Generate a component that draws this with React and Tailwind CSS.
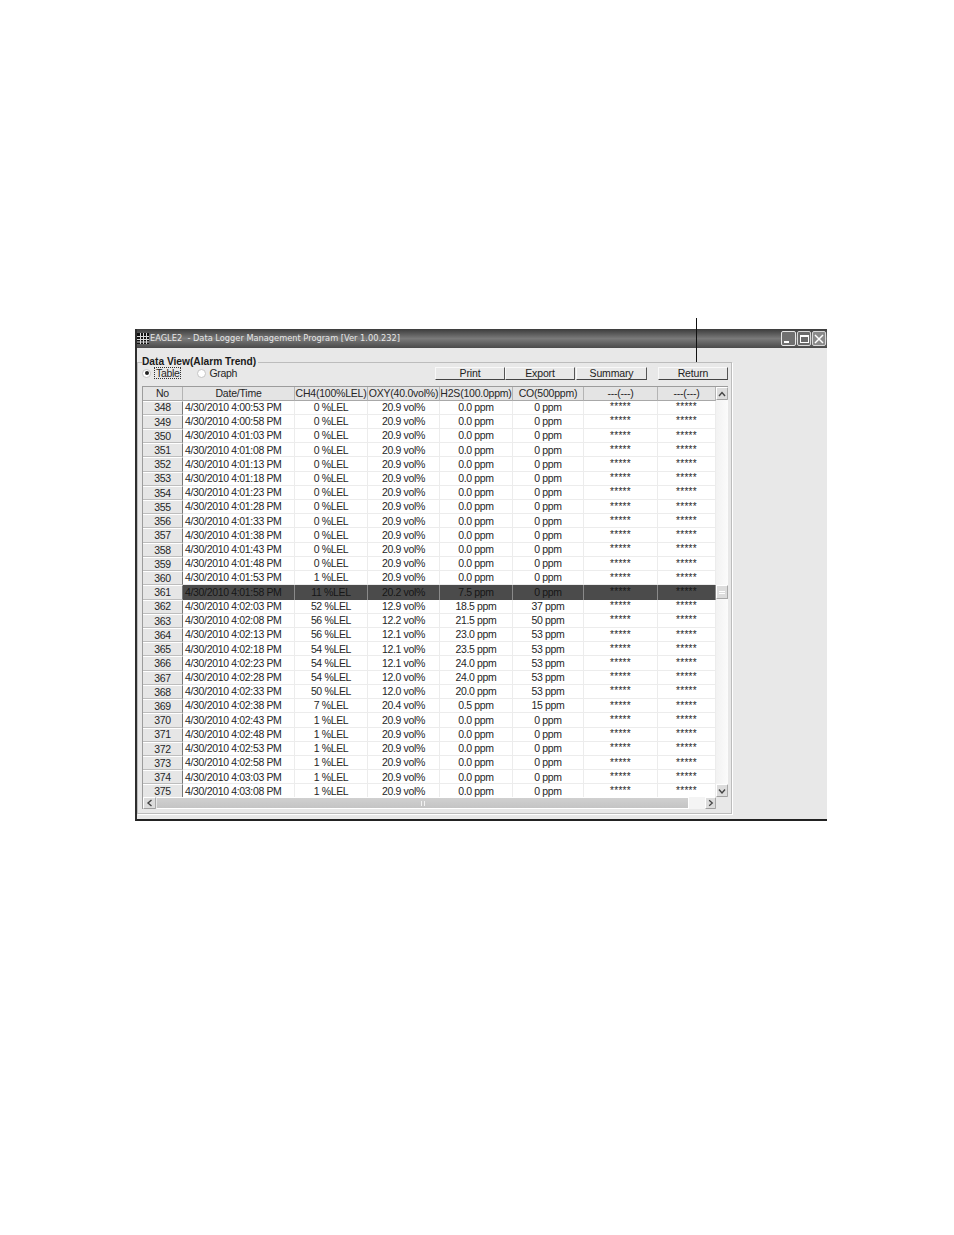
const font = "[font-family:'Liberation_Sans',Arial,sans-serif]";

const rowGrid = 'grid grid-cols-[40px_112px_73px_72px_73px_71px_74px_58px]';

const alarmRows = {
  360: [1, '20.9', '0.0', 0],
  361: [11, '20.2', '7.5', 0],
  362: [52, '12.9', '18.5', 37],
  363: [56, '12.2', '21.5', 50],
  364: [56, '12.1', '23.0', 53],
  365: [54, '12.1', '23.5', 53],
  366: [54, '12.1', '24.0', 53],
  367: [54, '12.0', '24.0', 53],
  368: [50, '12.0', '20.0', 53],
  369: [7, '20.4', '0.5', 15],
};

function timeFor(no) {
  const secs = 53 + (no - 348) * 5;
  const min = Math.floor(secs / 60);
  const hhmm = 240 + min;
  const h = Math.floor(hhmm / 60);
  const m = hhmm % 60;
  const s = secs % 60;
  return `4/30/2010 ${h}:${String(m).padStart(2, '0')}:${String(s).padStart(2, '0')} PM`;
}

function buildRows() {
  const rows = [];
  for (let no = 348; no <= 375; no++) {
    const vals = alarmRows[no] || (no < 360 ? [0, '20.9', '0.0', 0] : [1, '20.9', '0.0', 0]);
    rows.push({ no, time: timeFor(no), ch4: vals[0], oxy: vals[1], h2s: vals[2], co: vals[3] });
  }
  return rows;
}

function HeaderCell({ children }) {
  return (
    <div className="flex items-center justify-center border-r border-[#b4b4b4] border-b border-b-[#a8a8a8] bg-[#e4e4e4] whitespace-nowrap overflow-hidden text-[10.5px] tracking-[-0.22px]">
      {children}
    </div>
  );
}

function Row({ row }) {
  const selected = row.no === 361;
  const cell = selected
    ? 'flex items-center justify-center bg-[#4b4b4b] border-r border-[#8a8a8a] text-[#161616] whitespace-nowrap'
    : 'flex items-center justify-center border-r border-b border-[#ececec] whitespace-nowrap';
  return (
    <div className={`${rowGrid} h-[14.22px] shrink-0 leading-none`}>
      <div className="flex items-center justify-center bg-[#e6e6e6] border-r border-r-[#777777] border-b border-b-[#bdbdbd] border-t border-t-white">
        {row.no}
      </div>
      <div className={`${cell} !justify-start pl-[2px]`}>{row.time}</div>
      <div className={cell}>{row.ch4} %LEL</div>
      <div className={cell}>{row.oxy} vol%</div>
      <div className={cell}>{row.h2s} ppm</div>
      <div className={cell}>{row.co} ppm</div>
      <div className={`${cell} text-[10px] tracking-[0.3px]`}>*****</div>
      <div className={`${cell} text-[10px] tracking-[0.3px]`}>*****</div>
    </div>
  );
}

function ToolButton({ label, className = '' }) {
  return (
    <button className={`h-[13px] w-[70px] bg-[#e8e8e8] border-t border-l border-t-[#f8f8f8] border-l-[#f8f8f8] border-r border-b border-r-[#555555] border-b-[#444444] text-[10.5px] tracking-[-0.15px] leading-none text-[#222222] ${className}`}>
      {label}
    </button>
  );
}

function Radio({ checked }) {
  return (
    <span className="flex items-center justify-center w-[9px] h-[9px] rounded-full bg-white border border-[#c4c4c4]">
      {checked && <span className="w-[4px] h-[4px] rounded-full bg-[#222222]" />}
    </span>
  );
}

function ScrollBtn({ dir, className = '' }) {
  const paths = {
    up: 'M2 7 L5 3.5 L8 7',
    down: 'M2 3.5 L5 7 L8 3.5',
    left: 'M6.5 2 L3 5 L6.5 8',
    right: 'M3.5 2 L7 5 L3.5 8',
  };
  return (
    <div className={`flex items-center justify-center shrink-0 bg-[#dcdcdc] border border-white border-r-[#a8a8a8] border-b-[#a0a0a0] rounded-[1px] ${className}`}>
      <svg width="10" height="10" viewBox="0 0 10 10">
        <path d={paths[dir]} fill="none" stroke="#444444" strokeWidth="1.4" />
      </svg>
    </div>
  );
}

export default function App() {
  const rows = buildRows();
  return (
    <div className={`relative w-[954px] h-[1235px] bg-white pt-[329px] pl-[135px] ${font} text-[10.5px] tracking-[-0.34px] text-[#262626]`}>
      {/* leader line to the Return button */}
      <div className="absolute left-[696px] top-[318px] w-px h-[44px] bg-[#111111] z-10" />

      <div className="w-[692px] h-[492px] bg-[#e8e8e8] border-l-2 border-l-[#2e2e2e] border-b-2 border-b-[#222222] flex flex-col">
        {/* title bar */}
        <div className="h-[19px] shrink-0 flex items-center bg-gradient-to-b from-[#3c3c3c] via-[#7a7a7a] to-[#4a4a4a] pr-[1px]">
          <svg width="12" height="11" viewBox="0 0 12 11" className="shrink-0">
            <rect width="12" height="11" fill="#111111" />
            <path d="M0 3.5H12M0 6.5H12M0 9H12M3.5 0V11M6.5 0V11M9.5 0V11" stroke="#d8d8d8" strokeWidth="1" />
          </svg>
          <span className="ml-[1px] text-[8.25px] tracking-normal text-[#e6e6e6] whitespace-pre [font-family:'DejaVu_Sans',sans-serif]">
            EAGLE2  - Data Logger Management Program [Ver 1.00.232]
          </span>
          <div className="ml-auto flex gap-[1px]">
            <div className="relative w-[15px] h-[15px] rounded-[2px] border border-[#e8e8e8] bg-[#707070]">
              <div className="absolute left-[2px] bottom-[2px] w-[5px] h-[2px] bg-white" />
            </div>
            <div className="flex items-center justify-center w-[14px] h-[15px] rounded-[2px] border border-[#d8d8d8] bg-[#6a6a6a]">
              <div className="w-[9px] h-[8px] border border-white border-t-2" />
            </div>
            <div className="flex items-center justify-center w-[14px] h-[15px] rounded-[2px] border border-[#d8d8d8] bg-[#8a8a8a]">
              <svg width="10" height="10" viewBox="0 0 10 10">
                <path d="M1 1L9 9M9 1L1 9" stroke="#ffffff" strokeWidth="1.5" />
              </svg>
            </div>
          </div>
        </div>

        {/* group box */}
        <div className="mt-[14px] w-[595px] h-[452px] border border-[#bcbcbc] shadow-[1px_1px_0_#ffffff] relative px-[4px] pt-[3px]">
          <span className="absolute left-[4px] top-[-6px] bg-[#e8e8e8] pr-[2px] text-[10.2px] tracking-normal font-bold leading-none text-[#1a1a1a]">
            Data View(Alarm Trend)
          </span>

          <div className="flex items-center h-[14px] relative">
            <Radio checked />
            <span className="ml-[3px] border border-dotted border-[#333333] px-[1px] leading-[10px]">Table</span>
            <span className="ml-[16px]"><Radio /></span>
            <span className="ml-[3px] leading-[10px]">Graph</span>
            <div className="ml-auto flex -mr-[1px]">
              <ToolButton label="Print" />
              <ToolButton label="Export" />
              <ToolButton label="Summary" className="ml-[1px] w-[71px]" />
              <ToolButton label="Return" className="ml-[11px]" />
            </div>
          </div>

          {/* data grid */}
          <div className="mt-[6px] w-[586px] h-[423px] bg-white border-t border-l border-[#9c9c9c] flex flex-col">
            <div className="flex flex-1 min-h-0">
              <div className="w-[573px] flex flex-col overflow-hidden">
                <div className={`${rowGrid} h-[13.5px] shrink-0 leading-none`}>
                  <HeaderCell>No</HeaderCell>
                  <HeaderCell>Date/Time</HeaderCell>
                  <HeaderCell>CH4(100%LEL)</HeaderCell>
                  <HeaderCell>OXY(40.0vol%)</HeaderCell>
                  <HeaderCell>H2S(100.0ppm)</HeaderCell>
                  <HeaderCell>CO(500ppm)</HeaderCell>
                  <HeaderCell>---(---)</HeaderCell>
                  <HeaderCell>---(---)</HeaderCell>
                </div>
                {rows.map((r) => <Row key={r.no} row={r} />)}
              </div>
              {/* vertical scrollbar */}
              <div className="w-[12px] flex flex-col bg-gradient-to-r from-[#f2f2f2] to-[#fbfbfb]">
                <ScrollBtn dir="up" className="h-[13px]" />
                <div className="flex-1 flex flex-col pt-[185px]">
                  <div className="h-[14px] bg-[#dcdcdc] border border-white border-r-[#a8a8a8] border-b-[#a8a8a8] flex flex-col items-center justify-center gap-[1px]">
                    <div className="w-[6px] h-px bg-white" />
                    <div className="w-[6px] h-px bg-white" />
                  </div>
                </div>
                <ScrollBtn dir="down" className="h-[13px]" />
              </div>
            </div>
            {/* horizontal scrollbar */}
            <div className="h-[12px] shrink-0 flex bg-[#f4f4f4]">
              <ScrollBtn dir="left" className="w-[13px]" />
              <div className="w-[533px] bg-gradient-to-b from-[#d0d0d0] to-[#c4c4c4] border border-white border-l-[#e8e8e8] flex items-center justify-center">
                <span className="w-[4px] h-[5px] border-x border-[#f2f2f2]" />
              </div>
              <div className="w-[16px]" />
              <ScrollBtn dir="right" className="w-[11px]" />
              <div className="flex-1 bg-[#e8e8e8]" />
            </div>
          </div>
        </div>
      </div>
    </div>
  );
}
